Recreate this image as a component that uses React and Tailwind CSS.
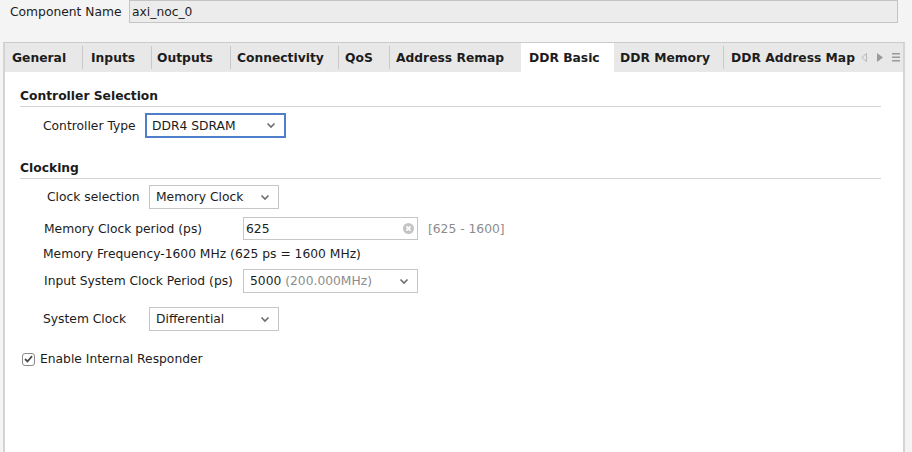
const tabs = [
  { label: "General", w: "w-[77px]", pl: "pl-[7px]", sep: true },
  { label: "Inputs", w: "w-[68px]", pl: "pl-[8px]", sep: true },
  { label: "Outputs", w: "w-[78px]", pl: "pl-[5px]", sep: true },
  { label: "Connectivity", w: "w-[107px]", pl: "pl-[6px]", sep: true },
  { label: "QoS", w: "w-[50px]", pl: "pl-[6px]", sep: true },
  { label: "Address Remap", w: "w-[131px]", pl: "pl-[6px]", sep: false },
  { label: "DDR Basic", w: "w-[93px]", pl: "pl-[8px]", sep: false, active: true },
  { label: "DDR Memory", w: "w-[109px]", pl: "pl-[6px]", sep: true },
  { label: "DDR Address Map", w: "w-[134px]", pl: "pl-[7px]", sep: false },
];

function Chevron() {
  return (
    <svg width="10" height="7" viewBox="0 0 10 7" className="shrink-0">
      <path d="M1.5 1.5 L5 5 L8.5 1.5" fill="none" stroke="#707070" strokeWidth="1.7" />
    </svg>
  );
}

function Select({ width, focused, children }) {
  return (
    <div
      className={
        focused
          ? `${width} h-[25px] flex items-center justify-between bg-white border-2 border-[#4f7fcb] pl-[5px] pr-[8px]`
          : `${width} h-[24px] flex items-center justify-between bg-white border border-[#c6c6c6] pl-[6px] pr-[8px]`
      }
    >
      <span className="whitespace-nowrap">{children}</span>
      <Chevron />
    </div>
  );
}

function SectionTitle({ children }) {
  return (
    <div className="font-bold leading-[16px] pb-[2px] border-b border-[#d4d4d4] mr-[22px]">
      {children}
    </div>
  );
}

export default function App() {
  return (
    <div className="w-[912px] h-[452px] overflow-hidden bg-[#f4f4f4] font-['DejaVu_Sans',sans-serif] text-[12.3px] leading-[16px] text-[#1c1c1c]">
      <div className="flex items-center h-[23px]">
        <span className="ml-[10px] w-[119px] whitespace-nowrap">Component Name</span>
        <div className="w-[769px] h-[23px] flex items-center pl-[2px] bg-[#ececec] border border-[#c4c4c4]">
          axi_noc_0
        </div>
      </div>

      <div className="mt-[19px] ml-[3px] w-[902px] h-[420px] border-x-2 border-t border-[#d4d4d4] border-t-[#cbcbcb] bg-white flex flex-col">
        <div className="flex h-[29px] bg-[#e8e8e8] font-bold">
          {tabs.map((t) => (
            <div key={t.label} className="flex items-center">
              <div
                className={`${t.w} ${t.pl} h-[29px] flex items-center whitespace-nowrap ${
                  t.active ? "bg-white" : ""
                }`}
              >
                {t.label}
              </div>
              {t.sep && <div className="w-px h-[23px] bg-[#c9c9c9]" />}
            </div>
          ))}
          <div className="flex items-center ml-[3px] gap-[10px]">
            <svg width="6" height="9" viewBox="0 0 6 9">
              <path d="M5.5 0.5 L0.8 4.5 L5.5 8.5 Z" fill="none" stroke="#b8b8b8" strokeWidth="1" />
            </svg>
            <svg width="6" height="9" viewBox="0 0 6 9">
              <path d="M0 0 L6 4.5 L0 9 Z" fill="#9a9a9a" />
            </svg>
            <svg width="8" height="9" viewBox="0 0 8 9" className="ml-[-1px]">
              <rect x="0" y="0" width="8" height="1.5" fill="#9a9a9a" />
              <rect x="0" y="3.5" width="8" height="1.5" fill="#9a9a9a" />
              <rect x="0" y="7" width="8" height="1.5" fill="#9a9a9a" />
            </svg>
          </div>
        </div>

        <div className="flex flex-col pl-[15px] pt-[16px]">
          <SectionTitle>Controller Selection</SectionTitle>
          <div className="flex items-center mt-[6px]">
            <span className="ml-[23px] w-[102px] whitespace-nowrap">Controller Type</span>
            <Select width="w-[141px]" focused>
              DDR4 SDRAM
            </Select>
          </div>

          <div className="mt-[22px]">
            <SectionTitle>Clocking</SectionTitle>
          </div>
          <div className="flex items-center mt-[6px]">
            <span className="ml-[27px] w-[102px] whitespace-nowrap">Clock selection</span>
            <Select width="w-[130px]">Memory Clock</Select>
          </div>

          <div className="flex items-center mt-[8px]">
            <span className="ml-[24px] w-[199px] whitespace-nowrap">Memory Clock period (ps)</span>
            <div className="w-[175px] h-[23px] flex items-center justify-between bg-white border border-[#c6c6c6] pl-[2px] pr-[3px]">
              <span>625</span>
              <svg width="11" height="11" viewBox="0 0 11 11">
                <circle cx="5.5" cy="5.5" r="5.5" fill="#c4c4c4" />
                <path d="M3.4 3.4 L7.6 7.6 M7.6 3.4 L3.4 7.6" stroke="#ffffff" strokeWidth="1.6" />
              </svg>
            </div>
            <span className="ml-[10px] text-[#8c8c8c] whitespace-nowrap">[625 - 1600]</span>
          </div>

          <div className="ml-[23px] mt-[6px] whitespace-nowrap">
            Memory Frequency-1600 MHz (625 ps = 1600 MHz)
          </div>

          <div className="flex items-center mt-[7px]">
            <span className="ml-[24px] w-[199px] whitespace-nowrap">Input System Clock Period (ps)</span>
            <Select width="w-[175px]">
              5000 <span className="text-[#8c8c8c]">(200.000MHz)</span>
            </Select>
          </div>

          <div className="flex items-center mt-[14px]">
            <span className="ml-[23px] w-[106px] whitespace-nowrap">System Clock</span>
            <Select width="w-[130px]">Differential</Select>
          </div>

          <div className="flex items-center mt-[20px] ml-[2px]">
            <div className="w-[13px] h-[13px] rounded-[3px] border border-[#8a8a8a] bg-white flex items-center justify-center">
              <svg width="9" height="8" viewBox="0 0 9 8">
                <path d="M1 4 L3.5 6.5 L8 1.2" fill="none" stroke="#4a4a4a" strokeWidth="1.8" />
              </svg>
            </div>
            <span className="ml-[5px] whitespace-nowrap">Enable Internal Responder</span>
          </div>
        </div>
      </div>
    </div>
  );
}
